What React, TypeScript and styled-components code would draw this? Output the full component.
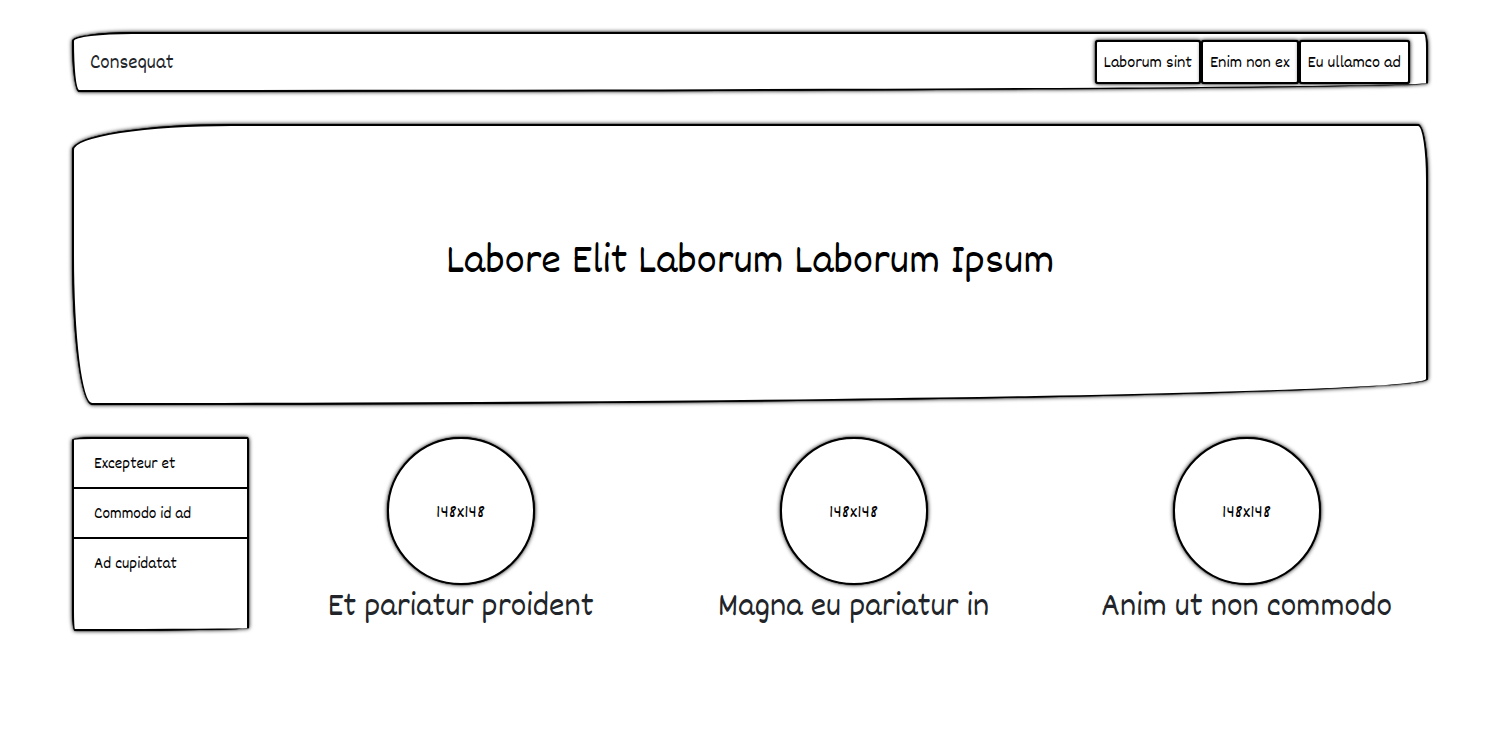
import React from "react";
import styled, { createGlobalStyle } from "styled-components";

const GlobalStyle = createGlobalStyle`
  *, *::before, *::after { box-sizing: border-box; }
  body {
    margin: 0;
    background: #fff;
    color: #212529;
    font-family: "Dekko", "Short Stack", "Lato", sans-serif;
    font-size: 17px;
    line-height: 24px;
  }
`;

const Page = styled.div`
  display: flex;
  flex-direction: column;
  gap: 32px;
  padding: 32px 72px;
`;

const Sketch = styled.div<{ $radius: string }>`
  border: 2px solid #000;
  border-radius: ${(p) => p.$radius};
  box-shadow: 0 0 1px #000, 0 0 4px #000;
  background: #fff;
`;

const NavBar = styled(Sketch)`
  display: flex;
  align-items: center;
  justify-content: space-between;
  height: 60px;
  padding: 0 16px;
`;

const Brand = styled.a`
  padding-top: 4px;
  color: #212529;
  font-size: 21px;
  text-decoration: none;
`;

const ButtonGroup = styled.div`
  display: flex;
`;

const NavButton = styled.button`
  height: 44px;
  padding: 4px 7px 0;
  border: 2px solid #000;
  border-radius: 3px;
  box-shadow: 0 0 1px #000, 0 0 4px #000;
  background: #fff;
  color: #000;
  font: inherit;
  font-size: 18px;
`;

const Hero = styled(Sketch)`
  display: flex;
  align-items: center;
  justify-content: center;
  height: 281px;
  padding-bottom: 4px;
`;

const HeroTitle = styled.h1`
  margin: 0;
  color: #000;
  font-size: 45px;
  font-weight: 400;
  line-height: 48px;
`;

const Content = styled.div`
  display: flex;
  gap: 15px;
`;

const Sidebar = styled(Sketch)`
  flex: 0 0 177px;
`;

const MenuItem = styled.a`
  display: block;
  padding: 14px 20px 10px;
  height: 50px;
  border-bottom: 2px solid #000;
  color: #000;
  text-decoration: none;
  &:last-child { border-bottom: 0; }
`;

const Features = styled.div`
  display: grid;
  flex: 1;
  grid-template-columns: repeat(3, 1fr);
  margin-right: -15px;
`;

const Feature = styled.div`
  display: flex;
  flex-direction: column;
  align-items: center;
`;

const Circle = styled(Sketch)`
  display: flex;
  align-items: center;
  justify-content: center;
  width: 148px;
  height: 148px;
  padding-top: 4px;
  color: #000;
  font-size: 20px;
`;

const FeatureTitle = styled.h2`
  margin: 0;
  font-size: 35px;
  font-weight: 400;
  line-height: 46px;
`;

export default function App() {
  return (
    <>
      <GlobalStyle />
      <Page>
        <NavBar as="nav" $radius="60px 4px 1340px 7px / 9px 16px 9px 50px">
          <Brand href="#">Consequat</Brand>
          <ButtonGroup>
            {["Laborum sint", "Enim non ex", "Eu ullamco ad"].map((t) => (
              <NavButton key={t} type="button">{t}</NavButton>
            ))}
          </ButtonGroup>
        </NavBar>
        <Hero as="header" $radius="160px 10px 1336px 20px / 26px 56px 26px 150px">
          <HeroTitle>Labore Elit Laborum Laborum Ipsum</HeroTitle>
        </Hero>
        <Content>
          <Sidebar as="nav" $radius="20px 2px 170px 3px / 3px 5px 3px 20px">
            {["Excepteur et", "Commodo id ad", "Ad cupidatat"].map((t) => (
              <MenuItem key={t} href="#">{t}</MenuItem>
            ))}
          </Sidebar>
          <Features>
            {["Et pariatur proident", "Magna eu pariatur in", "Anim ut non commodo"].map((t) => (
              <Feature key={t}>
                <Circle $radius="50%">148x148</Circle>
                <FeatureTitle>{t}</FeatureTitle>
              </Feature>
            ))}
          </Features>
        </Content>
      </Page>
    </>
  );
}
